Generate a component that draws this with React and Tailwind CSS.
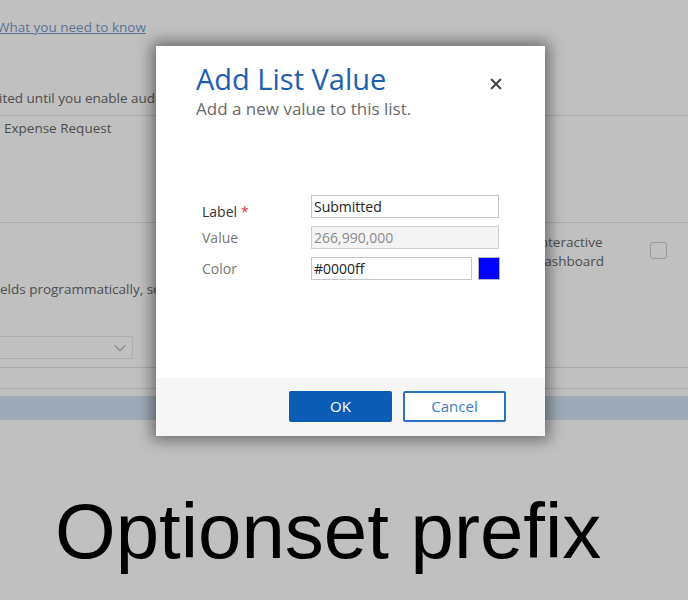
import React from 'react';

const uiFont = { fontFamily: '"Open Sans", "Noto Sans", sans-serif' };

const Line = () => <div className="h-px w-full bg-[#a9a9a9]"></div>;

const Backdrop = () => (
  <div className="flex flex-col text-[13.5px] text-[#4d4d4d]" style={uiFont}>
    <div className="h-[17px]"></div>
    <a className="-ml-[3px] h-[20px] leading-[20px] text-[#5b7396] underline">What you need to know</a>
    <div className="h-[51px]"></div>
    <div className="-ml-[1px] h-[20px] leading-[20px]">ited until you enable auditing</div>
    <div className="h-[7px]"></div>
    <Line />
    <div className="h-[2px]"></div>
    <div className="ml-[4px] h-[20px] leading-[20px]">Expense Request</div>
    <div className="h-[84px]"></div>
    <Line />
    <div className="flex h-[56px] items-start pt-[10px]">
      <div className="ml-[536px] w-[90px] leading-[19px]">Interactive dashboard</div>
      <div className="ml-[24px] mt-[9px] h-[17px] w-[17px] rounded-[3px] border border-[#9a9a9a]"></div>
    </div>
    <div className="-ml-[8px] h-[20px] leading-[20px]">fields programmatically, see</div>
    <div className="h-[37px]"></div>
    <div className="-ml-[2px] flex h-[23px] w-[135px] items-center justify-end rounded-[2px] border border-[#adadad] pr-[6px]">
      <svg width="12" height="8" viewBox="0 0 12 8" fill="none" stroke="#8a8a8a" strokeWidth="1.3">
        <path d="M1 1.5 L6 6.5 L11 1.5" />
      </svg>
    </div>
    <div className="h-[8px]"></div>
    <Line />
    <div className="h-[20px]"></div>
    <Line />
    <div className="h-[7px]"></div>
    <div className="h-[24px] w-full bg-[#9eaab8]"></div>
  </div>
);

const Field = ({ label, required, muted, children }) => (
  <div className="flex h-[23px] items-center">
    <div className={`w-[109px] text-[14px] ${required ? 'mt-[9px]' : ''} ${muted ? 'text-[#777777]' : 'text-[#333333]'}`}>
      {label}
      {required && <span className="ml-[4px] text-[#d13438]">*</span>}
    </div>
    {children}
  </div>
);

const Dialog = () => (
  <div
    className="absolute left-[156px] top-[46px] flex h-[390px] w-[389px] flex-col bg-white shadow-[0_0_14px_4px_rgba(0,0,0,0.45)]"
    style={uiFont}
  >
    <div className="relative flex-1 px-[40px] pt-[13px]">
      <div className="text-[29px] leading-[39px] text-[#1d5fae]">Add List Value</div>
      <div className="text-[17px] leading-[22px] text-[#6a6a6a]">Add a new value to this list.</div>
      <svg className="absolute left-[334px] top-[32px]" width="12" height="12" viewBox="0 0 12 12" stroke="#444" strokeWidth="2">
        <path d="M1 1 L11 11 M11 1 L1 11" />
      </svg>
      <div className="ml-[6px] mt-[75px] flex flex-col gap-[8px]">
        <Field label="Label" required>
          <div className="flex h-[23px] w-[188px] items-center border border-[#c6c6c6] px-[2px] text-[14px] text-[#222]">Submitted</div>
        </Field>
        <Field label="Value" muted>
          <div className="flex h-[23px] w-[188px] items-center border border-[#d0d0d0] bg-[#f4f4f4] px-[2px] text-[14px] text-[#8a8a8a]">266,990,000</div>
        </Field>
        <Field label="Color" muted>
          <div className="flex h-[23px] w-[161px] items-center border border-[#c6c6c6] px-[2px] text-[14px] text-[#222]">#0000ff</div>
          <div className="ml-[6px] h-[23px] w-[22px] border border-[#b4b4b4] bg-[#0000ff]"></div>
        </Field>
      </div>
    </div>
    <div className="flex h-[58px] items-start justify-end gap-[11px] bg-[#f6f6f6] pr-[39px] pt-[13px]">
      <button className="h-[31px] w-[103px] rounded-[2px] bg-[#0b5cb4] text-[15px] text-white">OK</button>
      <button className="h-[31px] w-[103px] rounded-[2px] border-2 border-[#2a72c3] bg-white text-[15px] text-[#3b7bc0]">Cancel</button>
    </div>
  </div>
);

export default function App() {
  return (
    <div className="relative h-[600px] w-[688px] overflow-hidden bg-[#c0c0c0]">
      <Backdrop />
      <div
        className="mt-[66px] pl-[55px] text-[78px] leading-[90px] text-black"
        style={{ fontFamily: '"Liberation Sans", Arial, sans-serif' }}
      >
        Optionset prefix
      </div>
      <Dialog />
    </div>
  );
}
